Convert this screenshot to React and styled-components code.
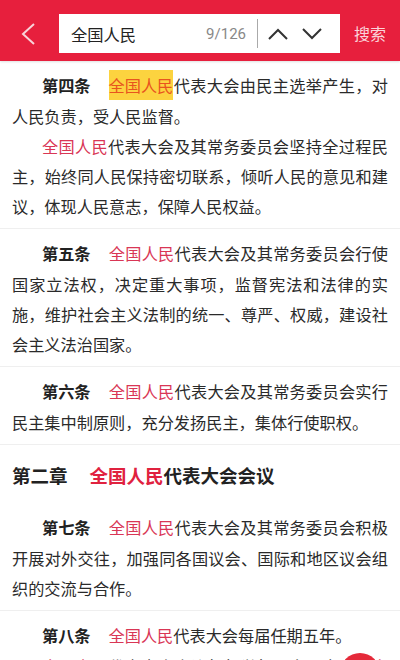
import React from "react";
import styled, { createGlobalStyle } from "styled-components";

const Global = createGlobalStyle`
  html, body { margin: 0; padding: 0; background: #fff; }
  body { overflow: hidden; font-family: "Noto Sans CJK SC", "Noto Sans", sans-serif; }
  * { box-sizing: border-box; }
`;

const Page = styled.div`
  width: 400px;
  height: 660px;
  overflow: hidden;
  position: relative;
  background: #fff;
`;

const Header = styled.header`
  height: 61px;
  background: #e71f3d;
  display: flex;
  align-items: flex-start;
  padding-top: 14px;
  box-shadow: 0 1px 2px rgba(0, 0, 0, 0.12);
  position: relative;
  z-index: 1;
`;

const BackButton = styled.div`
  width: 59px;
  height: 39px;
  display: flex;
  align-items: center;
  justify-content: flex-start;
  padding-left: 21px;
`;

const SearchBox = styled.div`
  width: 281px;
  height: 39px;
  background: #fff;
  display: flex;
  align-items: center;
  padding: 0 18px 0 12px;
`;

const Query = styled.span`
  flex: 1;
  font-size: 16.3px;
  color: #222;
`;

const Count = styled.span`
  font-size: 15px;
  color: #888;
  font-family: "Roboto", "Noto Sans", sans-serif;
  margin-right: 11px;
`;

const Divider = styled.div`
  width: 1px;
  height: 29px;
  background: #aaa;
  margin-right: 10px;
`;

const Arrow = styled.svg`
  width: 20px;
  height: 12px;
  margin-left: ${(p) => p.$gap || 0}px;
`;

const SearchButton = styled.span`
  margin-left: 14px;
  height: 39px;
  line-height: 39px;
  font-size: 16px;
  color: #fbd3d9;
`;

const Content = styled.main`
  font-size: 16.2px;
  color: #2a2a2a;
`;

const Article = styled.section`
  padding: 8px 12px 7px;
  border-bottom: 1px solid ${(p) => (p.$last ? "transparent" : "#efefef")};
`;

const Para = styled.p`
  margin: 0;
  line-height: 30px;
  text-indent: 30px;
  text-align: justify;
`;

const Label = styled.span`
  display: inline-block;
  line-height: 32px;
  font-weight: 700;
  color: #222;
  padding-right: 18px;
  text-indent: 0;
`;

const Match = styled.span`
  color: #d93655;
`;

const Current = styled.span`
  display: inline-block;
  text-indent: 0;
  line-height: 30px;
  background: #fcd33f;
  color: #e8541e;
`;

const Chapter = styled.h2`
  margin: 0;
  padding: 15px 12px 13px;
  font-size: 18.5px;
  line-height: 30px;
  font-weight: 700;
  color: #222;
`;

const ChapterNo = styled.span`
  padding-right: 22px;
`;

const ChapterMatch = styled.span`
  color: #e0223f;
`;

const Fab = styled.div`
  position: absolute;
  left: 340px;
  top: 653px;
  width: 40px;
  height: 40px;
  border-radius: 50%;
  background: #e52a3a;
`;

const Q = "全国人民";

export default function App() {
  return (
    <Page>
      <Global />
      <Header>
        <BackButton>
          <svg width="15" height="22" viewBox="0 0 15 22">
            <polyline points="13,1 2,11 13,21" fill="none" stroke="#f8d3d9" strokeWidth="2" />
          </svg>
        </BackButton>
        <SearchBox>
          <Query>全国人民</Query>
          <Count>9/126</Count>
          <Divider />
          <Arrow viewBox="0 0 20 12">
            <polyline points="1,11 10,2 19,11" fill="none" stroke="#333" strokeWidth="2" />
          </Arrow>
          <Arrow viewBox="0 0 20 12" $gap={14}>
            <polyline points="1,1 10,10 19,1" fill="none" stroke="#333" strokeWidth="2" />
          </Arrow>
        </SearchBox>
        <SearchButton>搜索</SearchButton>
      </Header>
      <Content>
        <Article>
          <Para>
            <Label>第四条</Label>
            <Current>{Q}</Current>代表大会由民主选举产生，对人民负责，受人民监督。
          </Para>
          <Para>
            <Match>{Q}</Match>代表大会及其常务委员会坚持全过程民主，始终同人民保持密切联系，倾听人民的意见和建议，体现人民意志，保障人民权益。
          </Para>
        </Article>
        <Article>
          <Para>
            <Label>第五条</Label>
            <Match>{Q}</Match>代表大会及其常务委员会行使国家立法权，决定重大事项，监督宪法和法律的实施，维护社会主义法制的统一、尊严、权威，建设社会主义法治国家。
          </Para>
        </Article>
        <Article>
          <Para>
            <Label>第六条</Label>
            <Match>{Q}</Match>代表大会及其常务委员会实行民主集中制原则，充分发扬民主，集体行使职权。
          </Para>
        </Article>
        <Chapter>
          <ChapterNo>第二章</ChapterNo>
          <ChapterMatch>{Q}</ChapterMatch>代表大会会议
        </Chapter>
        <Article>
          <Para>
            <Label>第七条</Label>
            <Match>{Q}</Match>代表大会及其常务委员会积极开展对外交往，加强同各国议会、国际和地区议会组织的交流与合作。
          </Para>
        </Article>
        <Article $last>
          <Para>
            <Label>第八条</Label>
            <Match>{Q}</Match>代表大会每届任期五年。
          </Para>
          <Para>
            <Match>{Q}</Match>代表大会会议每年举行一次，由<Match>{Q}</Match>代表大会常务委员会召集。
          </Para>
        </Article>
      </Content>
      <Fab />
    </Page>
  );
}
